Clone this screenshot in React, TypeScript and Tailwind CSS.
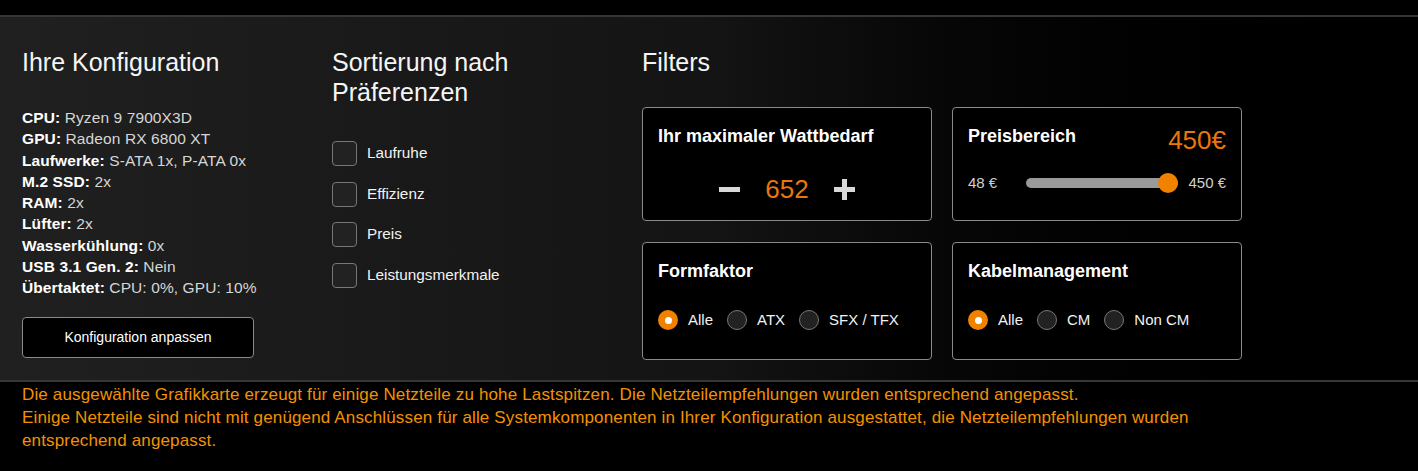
import React from "react";

const specs: [string, string][] = [
  ["CPU:", "Ryzen 9 7900X3D"],
  ["GPU:", "Radeon RX 6800 XT"],
  ["Laufwerke:", "S-ATA 1x, P-ATA 0x"],
  ["M.2 SSD:", "2x"],
  ["RAM:", "2x"],
  ["Lüfter:", "2x"],
  ["Wasserkühlung:", "0x"],
  ["USB 3.1 Gen. 2:", "Nein"],
  ["Übertaktet:", "CPU: 0%, GPU: 10%"],
];

function Checkbox({ label }: { label: string }) {
  return (
    <div className="flex h-[25px] items-center">
      <span className="h-[25px] w-[25px] rounded-[4px] border-[1.5px] border-[#777] bg-[#222]" />
      <span className="ml-[10px] text-[15.3px] text-[#f2f2f2]">{label}</span>
    </div>
  );
}

function Radio({ checked, label }: { checked?: boolean; label: string }) {
  return (
    <div className="flex items-center">
      {checked ? (
        <span className="flex h-5 w-5 items-center justify-center rounded-full bg-[#f08200]">
          <span className="h-[7px] w-[7px] rounded-full bg-white" />
        </span>
      ) : (
        <span className="h-5 w-5 rounded-full border-[1.5px] border-[#777] bg-[#222]" />
      )}
      <span className="ml-[10px] text-[15px] text-[#f2f2f2]">{label}</span>
    </div>
  );
}

function Card({ children, h }: { children: React.ReactNode; h: string }) {
  return (
    <div className={`${h} rounded-[4px] border border-[#8a8a8a] bg-black px-[15px] pt-4`}>
      {children}
    </div>
  );
}

export default function App() {
  return (
    <div className="min-h-[471px] w-[1418px] bg-black font-['Liberation_Sans',Arial,sans-serif] text-white">
      <div className="h-[15px] bg-black" />
      <div className="grid grid-cols-[310px_310px_600px] border-y-2 border-[#363636] bg-linear-to-r from-[#202020] via-[#141414] to-black pb-[20px] pl-[22px] pt-[30px]">
        {/* Column 1 */}
        <div>
          <h2 className="text-[25px] leading-[30px] font-normal text-[#f5f5f5]">Ihre Konfiguration</h2>
          <div className="mt-[30px] text-[15.5px] leading-[21.25px] tracking-[0.1px]">
            {specs.map(([k, v]) => (
              <div key={k}>
                <span className="font-bold text-white">{k}</span>{" "}
                <span className="text-[#d6d6d6]">{v}</span>
              </div>
            ))}
          </div>
          <button className="mt-[19px] flex h-[41px] w-[232px] items-center justify-center rounded-[4px] border border-[#8a8a8a] bg-black text-[14px] text-white">
            Konfiguration anpassen
          </button>
        </div>

        {/* Column 2 */}
        <div>
          <h2 className="max-w-[280px] text-[25px] leading-[30px] font-normal text-[#f5f5f5]">
            Sortierung nach Präferenzen
          </h2>
          <div className="mt-[34px] flex flex-col gap-[15.5px]">
            <Checkbox label="Laufruhe" />
            <Checkbox label="Effizienz" />
            <Checkbox label="Preis" />
            <Checkbox label="Leistungsmerkmale" />
          </div>
        </div>

        {/* Column 3 */}
        <div>
          <h2 className="text-[25px] leading-[30px] font-normal text-[#f5f5f5]">Filters</h2>
          <div className="mt-[30px] grid grid-cols-[290px_290px] gap-x-[20px] gap-y-[21px]">
            <Card h="h-[114px]">
              <div className="text-[18px] leading-[24px] font-bold">Ihr maximaler Wattbedarf</div>
              <div className="mt-[26px] flex h-[30px] items-center justify-center gap-[25px]">
                <svg width="21" height="21" viewBox="0 0 21 21">
                  <rect x="0" y="8" width="21" height="5" fill="#d8d8d8" />
                </svg>
                <span className="text-[26px] leading-[30px] text-[#ea760c]">652</span>
                <svg width="21" height="21" viewBox="0 0 21 21">
                  <rect x="0" y="8" width="21" height="5" fill="#d8d8d8" />
                  <rect x="8" y="0" width="5" height="21" fill="#d8d8d8" />
                </svg>
              </div>
            </Card>
            <Card h="h-[114px]">
              <div className="flex h-[24px] items-start justify-between">
                <span className="text-[18px] leading-[24px] font-bold">Preisbereich</span>
                <span className="mt-[1px] text-[26px] leading-[30px] text-[#ea760c]">450€</span>
              </div>
              <div className="mt-[25px] flex h-5 items-center">
                <span className="text-[15px] text-[#d0d0d0]">48 €</span>
                <div className="relative ml-[29px] mr-[10px] h-[10px] flex-1 rounded-full bg-[#9a9a9a]">
                  <span className="absolute right-0 top-1/2 h-5 w-5 -translate-y-1/2 rounded-full bg-[#f08200]" />
                </div>
                <span className="text-[15px] text-[#d0d0d0]">450 €</span>
              </div>
            </Card>
            <Card h="h-[118px]">
              <div className="text-[18px] leading-[24px] font-bold">Formfaktor</div>
              <div className="mt-[26px] flex gap-[14px]">
                <Radio checked label="Alle" />
                <Radio label="ATX" />
                <Radio label="SFX / TFX" />
              </div>
            </Card>
            <Card h="h-[118px]">
              <div className="text-[18px] leading-[24px] font-bold">Kabelmanagement</div>
              <div className="mt-[26px] flex gap-[14px]">
                <Radio checked label="Alle" />
                <Radio label="CM" />
                <Radio label="Non CM" />
              </div>
            </Card>
          </div>
        </div>
      </div>

      <div className="pb-[15px] pl-[22px] pt-[1px] text-[17px] leading-[23px] tracking-[0.15px] text-[#f39200]">
        <p>
          Die ausgewählte Grafikkarte erzeugt für einige Netzteile zu hohe Lastspitzen. Die Netzteilempfehlungen wurden entsprechend angepasst.
        </p>
        <p>
          Einige Netzteile sind nicht mit genügend Anschlüssen für alle Systemkomponenten in Ihrer Konfiguration ausgestattet, die Netzteilempfehlungen wurden
          <br />
          entsprechend angepasst.
        </p>
      </div>
    </div>
  );
}
